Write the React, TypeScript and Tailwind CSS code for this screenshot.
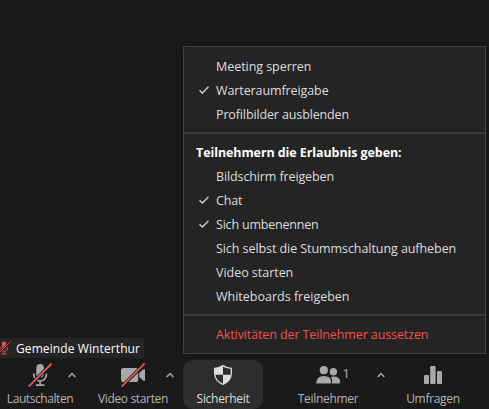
import React from 'react';

type Row = { label: string; checked?: boolean; tracking: string };

const generalRows: Row[] = [
  { label: 'Meeting sperren', tracking: 'tracking-[-0.05px]' },
  { label: 'Warteraumfreigabe', checked: true, tracking: 'tracking-[-0.1px]' },
  { label: 'Profilbilder ausblenden', tracking: 'tracking-[-0.13px]' },
];

const permissionRows: Row[] = [
  { label: 'Bildschirm freigeben', tracking: 'tracking-[-0.12px]' },
  { label: 'Chat', checked: true, tracking: 'tracking-[-0.2px]' },
  { label: 'Sich umbenennen', checked: true, tracking: 'tracking-[-0.2px]' },
  { label: 'Sich selbst die Stummschaltung aufheben', tracking: 'tracking-[-0.07px]' },
  { label: 'Video starten', tracking: 'tracking-[-0.03px]' },
  { label: 'Whiteboards freigeben', tracking: 'tracking-[0px]' },
];

function MenuRow({ row }: { row: Row }) {
  return (
    <li className="flex h-6 items-center pl-[14px]">
      <span className="w-[18px] shrink-0">
        {row.checked && (
          <svg width="12" height="10" viewBox="0 0 12 10" fill="none" stroke="#d0d0d0" strokeWidth="1.4">
            <path d="M1.5 5.2 4.4 8 10.5 1.7" />
          </svg>
        )}
      </span>
      <span className={`pt-[2px] whitespace-nowrap ${row.tracking}`}>{row.label}</span>
    </li>
  );
}

function Divider() {
  return <div className="h-[2px] bg-[#3a3a3a]" />;
}

function SecurityMenu() {
  return (
    <div className="absolute top-[46px] left-[183px] h-[308px] w-[303px] border border-[#424242] bg-[#242424] pt-[7px] text-[12.5px] text-[#dedede] shadow-[0_0_6px_rgba(0,0,0,0.4)]">
      <ul className="mb-[6px] pl-0">
        {generalRows.map((r) => <MenuRow key={r.label} row={r} />)}
      </ul>
      <Divider />
      <div className="mt-[6px] flex h-6 items-center pt-[2px] pl-3 font-bold tracking-[-0.09px] whitespace-nowrap text-white">
        Teilnehmern die Erlaubnis geben:
      </div>
      <ul className="mb-[6px]">
        {permissionRows.map((r) => <MenuRow key={r.label} row={r} />)}
      </ul>
      <Divider />
      <div className="mt-[6px] flex h-6 items-center pt-[2px] pl-8 tracking-[-0.11px] whitespace-nowrap text-[#f0504f]">
        Aktivitäten der Teilnehmer aussetzen
      </div>
    </div>
  );
}

function MutedMic({ size, color }: { size: number; color: string }) {
  return (
    <svg width={size} height={size} viewBox="0 0 24 24" fill="none">
      <rect x="8.3" y="1" width="7.6" height="13.6" rx="3.8" fill={color} />
      <path d="M5.8 10.5v1.2a6.3 6.3 0 0 0 12.6 0v-1.2M12.1 18v4M8 22.2h8.4" stroke={color} strokeWidth="1.7" />
      <path d="M1 23.5 23.5.8" stroke="#1c1c1c" strokeWidth="3.6" />
      <path d="M.7 23.5 23.5.7" stroke="#f05a5a" strokeWidth="1.7" />
    </svg>
  );
}

function MutedCamera() {
  return (
    <svg width="25" height="24" viewBox="0 0 25 24" fill="none">
      <rect x="0" y="5" width="17.2" height="14" rx="2.6" fill="#a8a8a8" />
      <path d="M18.2 10 22.2 6.5Q24 5.2 24 7.1v9.8q0 1.9-1.8.6L18.2 14Z" fill="#a8a8a8" />
      <path d="M1 23.5 23.5.8" stroke="#1a1a1a" strokeWidth="3.4" />
      <path d="M.7 23.5 23.5.7" stroke="#f05a5a" strokeWidth="1.7" />
    </svg>
  );
}

function Shield() {
  return (
    <svg width="20" height="22" viewBox="0 0 20 22" fill="none">
      <path d="M10 1.7v9.1H1.8V4.4Q6.7 4.2 10 1.7ZM10 10.8h8.2Q17.6 17 10 20.2Z" fill="#dcdcdc" />
      <path d="M10 1.6Q13.7 4.3 18.3 4.4v5.4Q18 17.2 10 20.3 2 17.2 1.7 9.8V4.4Q6.3 4.3 10 1.6Z" stroke="#dcdcdc" strokeWidth="1.3" />
    </svg>
  );
}

function People() {
  return (
    <svg width="25" height="24" viewBox="0 0 25 24" fill="#a8a8a8">
      <circle cx="7.8" cy="7.2" r="4.1" />
      <circle cx="17.4" cy="8.7" r="3.7" />
      <path d="M.2 20.6Q.2 13 7.8 13q7.4 0 7.4 6.3 0 1.3-1.3 1.3Z" />
      <path d="M15.6 20.6Q17.1 17.4 14.9 14q1-.4 2.5-.4 6.8 0 6.8 5.7 0 1.3-1.3 1.3Z" />
    </svg>
  );
}

function Bars() {
  return (
    <svg width="18" height="18" viewBox="0 0 18 18" fill="#a8a8a8">
      <rect x="0" y="9" width="5" height="9" rx="1" />
      <rect x="6.2" y="0" width="5.4" height="18" rx="1" />
      <rect x="13" y="5" width="5" height="13" rx="1" />
    </svg>
  );
}

function Caret() {
  return (
    <svg width="8" height="6" viewBox="0 0 8 6" fill="none" stroke="#a8a8a8" strokeWidth="1.5">
      <path d="M.7 4.9 4 1.5l3.3 3.4" />
    </svg>
  );
}

type ToolProps = {
  label: string;
  icon: React.ReactNode;
  place: string;
  caret?: boolean;
  count?: number;
  tone?: string;
  text?: string;
};

function Tool({ label, icon, place, caret, count, tone = 'text-[#b4b4b4]', text = 'tracking-[-0.3px]' }: ToolProps) {
  return (
    <button className={`flex h-[49px] shrink-0 flex-col items-center ${place} ${tone}`}>
      <span className="grid h-[30px] w-full grid-cols-[1fr_auto_1fr] items-center">
        <span />
        <span className="flex">{icon}</span>
        <span className="flex items-center justify-between">
          <span className="w-2 pb-[4px] pl-[2px] text-[13px] leading-4">{count}</span>
          {caret && <Caret />}
        </span>
      </span>
      <span className={`pt-px text-[12px] leading-4 whitespace-nowrap ${text}`}>{label}</span>
    </button>
  );
}

export default function App() {
  return (
    <main className="relative flex h-[409px] w-[489px] flex-col overflow-hidden bg-[#1a1a1a] font-['Open_Sans','Noto_Sans',sans-serif]">
      <section className="flex h-[358px] items-end">
        <div className="flex h-5 w-[144px] items-center overflow-hidden bg-[#242424] text-[12px] text-white">
          <span className="-ml-[3px] w-[19px] shrink-0"><MutedMic size={14} color="#e85050" /></span>
          <span className="pt-[2px] tracking-[0.1px] whitespace-nowrap">Gemeinde Winterthur</span>
        </div>
      </section>
      <nav className="flex h-[51px] pt-[2px]">
        <Tool label="Lautschalten" icon={<MutedMic size={24} color="#a8a8a8" />} place="w-[80px] px-1" caret text="tracking-[-0.43px]" />
        <Tool label="Video starten" icon={<MutedCamera />} place="ml-3 w-[82px]" caret text="tracking-[-0.35px]" />
        <Tool label="Sicherheit" icon={<Shield />} place="ml-[9px] w-[80px] rounded-[10px] bg-[#2d2d2d]" tone="text-[#dedede]" />
        <Tool label="Teilnehmer" icon={<People />} place="ml-[8px] w-[114px]" caret count={1} />
        <Tool label="Umfragen" icon={<Bars />} place="ml-[8px] w-[80px]" />
      </nav>
      <SecurityMenu />
    </main>
  );
}
